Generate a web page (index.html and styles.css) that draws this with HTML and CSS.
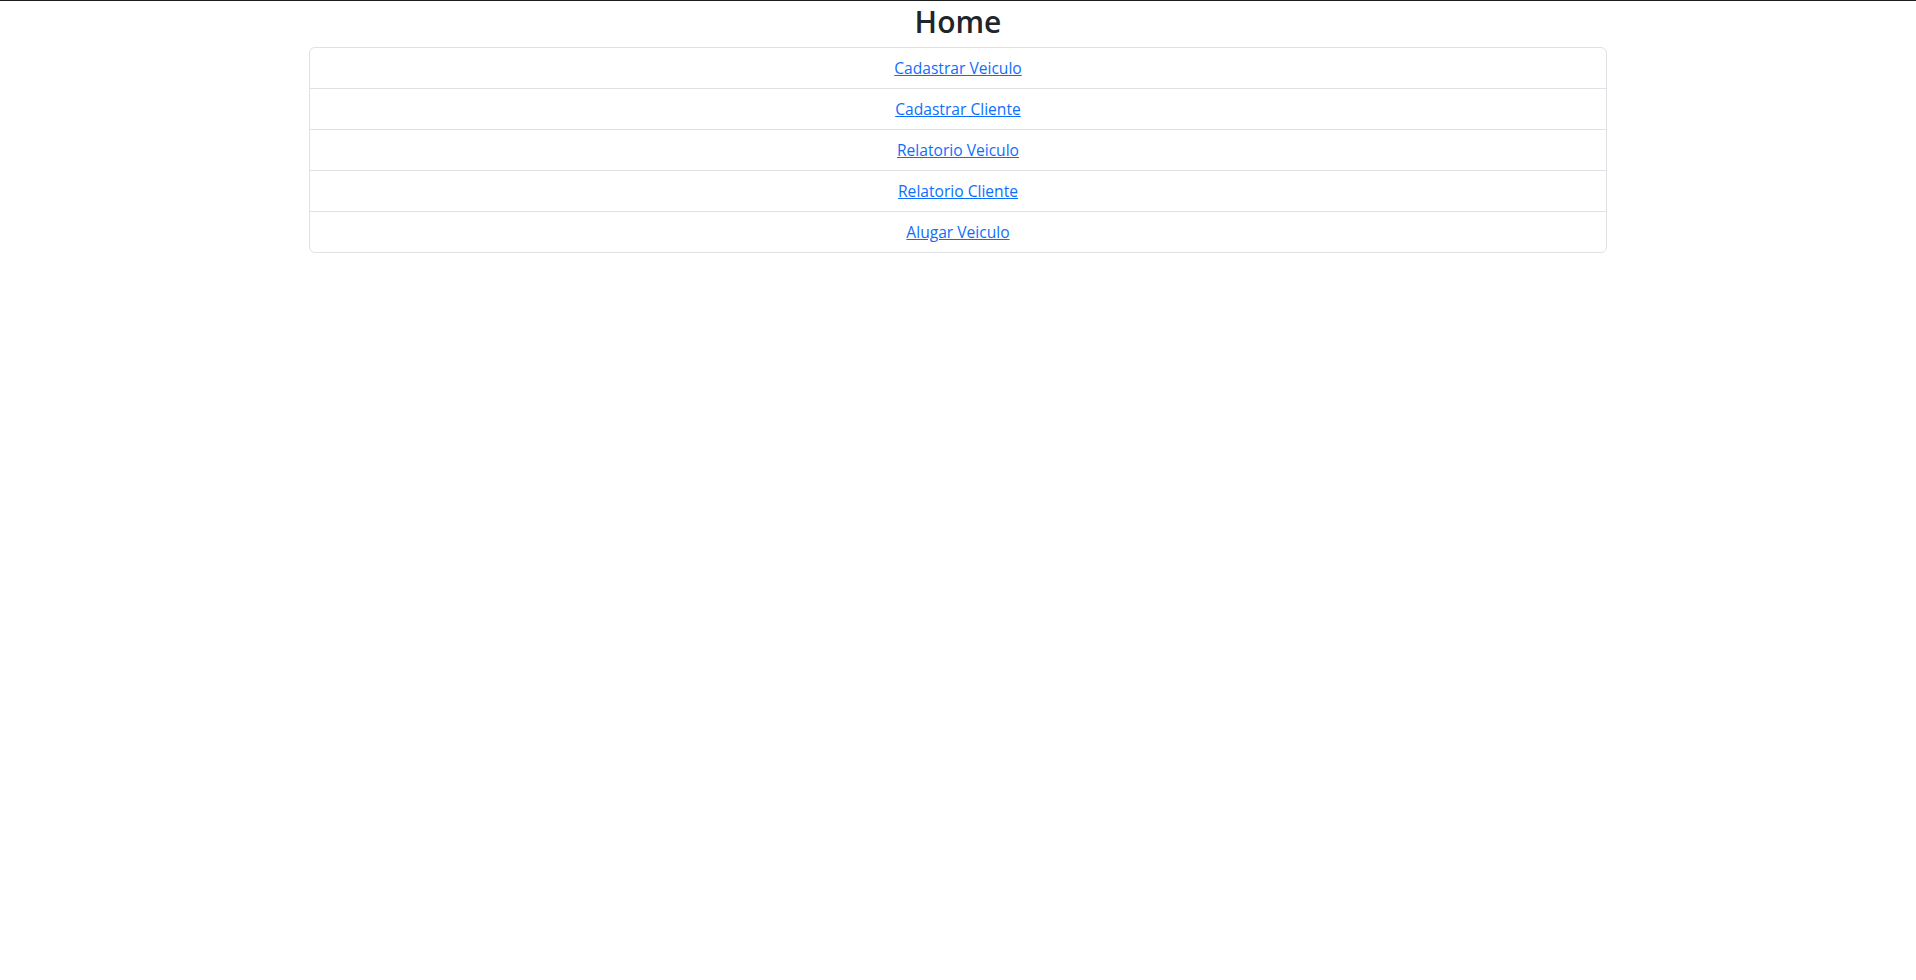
FILE: index.html
```html
<!DOCTYPE html>
<html lang="pt">
<head>
<meta charset="utf-8">
<title>Home</title>
<link rel="stylesheet" href="styles.css">
</head>
<body>
<div class="topline"></div>
<div class="container">
  <h2 class="title">Home</h2>
  <ul class="list-group">
    <li class="list-item"><a href="#">Cadastrar Veiculo</a></li>
    <li class="list-item"><a href="#">Cadastrar Cliente</a></li>
    <li class="list-item"><a href="#">Relatorio Veiculo</a></li>
    <li class="list-item"><a href="#">Relatorio Cliente</a></li>
    <li class="list-item"><a href="#">Alugar Veiculo</a></li>
  </ul>
</div>
</body>
</html>
```
FILE: styles.css
```css
* { box-sizing: border-box; }
html, body {
  margin: 0;
  padding: 0;
  background: #fff;
}
body {
  font-family: "Open Sans", "Noto Sans", "Liberation Sans", sans-serif;
  font-size: 16px;
  line-height: 1.5;
  color: #212529;
}
.topline {
  height: 1px;
  background: #1c1c1c;
}
.container {
  width: 1322px;
  margin: 0 auto;
  padding: 0 12px;
}
.title {
  margin: 0 0 6px;
  padding-top: 1px;
  text-align: center;
  font-size: 30px;
  font-weight: 600;
  line-height: 39px;
  color: #212529;
}
.list-group {
  list-style: none;
  margin: 0;
  padding: 0;
  border: 1px solid #dee2e6;
  border-radius: 6px;
}
.list-item {
  padding: 8px 16px;
  text-align: center;
  border-top: 1px solid #dee2e6;
  font-size: 15.6px;
  line-height: 24px;
}
.list-item:first-child { border-top: none; }
.list-item a {
  color: #0d6efd;
  text-decoration: underline;
}
```
